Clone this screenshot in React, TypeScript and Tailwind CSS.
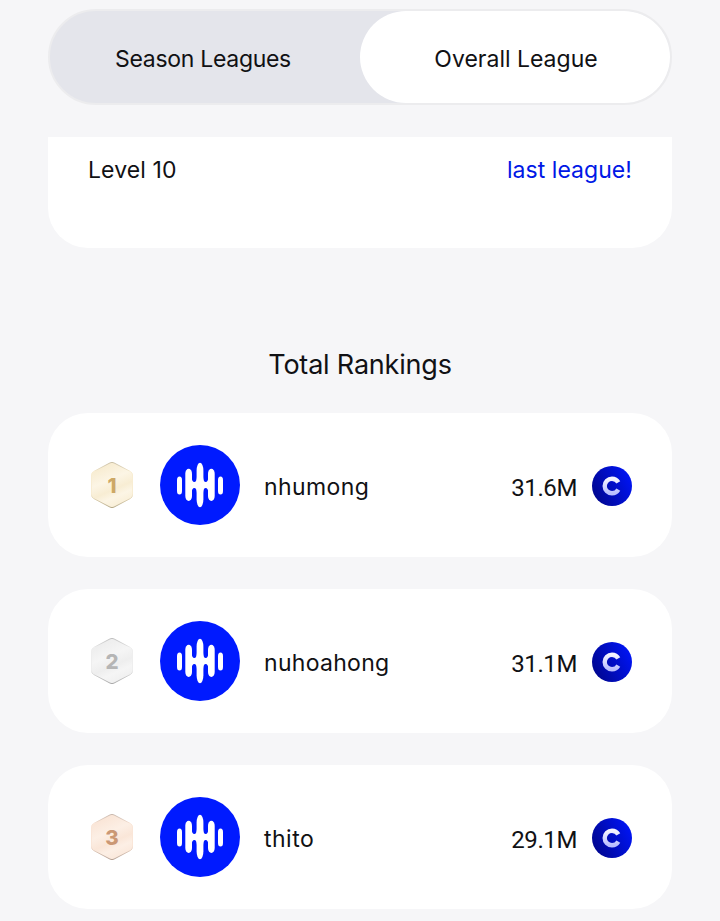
import React from "react";
import clsx from "clsx";

type Tier = "gold" | "silver" | "bronze";

interface Player {
  rank: number;
  name: string;
  score: string;
  tier: Tier;
  nameClass: string;
}

const players: Player[] = [
  {
    rank: 1,
    name: "nhumong",
    score: "31.6M",
    tier: "gold",
    nameClass: "tracking-[0.4px]",
  },
  {
    rank: 2,
    name: "nuhoahong",
    score: "31.1M",
    tier: "silver",
    nameClass: "tracking-[0.3px]",
  },
  {
    rank: 3,
    name: "thito",
    score: "29.1M",
    tier: "bronze",
    nameClass: "tracking-[0.5px]",
  },
];

const tierColors = {
  gold: { light: "#fcf5e5", dark: "#f8edd3", edge: "#b5a887", text: "#cda866" },
  silver: {
    light: "#f5f5f5",
    dark: "#eeeeee",
    edge: "#a8a8a8",
    text: "#b5b5b5",
  },
  bronze: {
    light: "#fcefe5",
    dark: "#fae6d8",
    edge: "#b49f92",
    text: "#cb9874",
  },
};

const RankBadge = ({ rank, tier }: { rank: number; tier: Tier }) => {
  const colors = tierColors[tier];

  return (
    <svg viewBox="0 0 48 48" className="size-12 shrink-0">
      <defs>
        <linearGradient id={`face-${tier}`} x1="0.3" y1="0" x2="0.7" y2="1">
          <stop offset="0.1" stopColor={colors.dark} />
          <stop offset="0.38" stopColor={colors.light} />
          <stop offset="0.6" stopColor={colors.dark} />
          <stop offset="0.75" stopColor={colors.light} />
          <stop offset="1" stopColor={colors.dark} />
        </linearGradient>
        <linearGradient id={`edge-${tier}`} x1="0" y1="0" x2="0" y2="1">
          <stop offset="0" stopColor={colors.edge} stopOpacity="0.7" />
          <stop offset="0.2" stopColor={colors.dark} />
          <stop offset="0.7" stopColor={colors.dark} />
          <stop offset="1" stopColor={colors.edge} />
        </linearGradient>
      </defs>
      <path
        d="M22 1.9Q24 .9 26 1.9L42.5 10.6Q44.5 11.7 44.5 14V34Q44.5 36.3 42.5 37.4L26 46.1Q24 47.1 22 46.1L5.5 37.4Q3.5 36.3 3.5 34V14Q3.5 11.7 5.5 10.6Z"
        fill={`url(#face-${tier})`}
        stroke={`url(#edge-${tier})`}
      />
      <text
        x="24"
        y="31.7"
        textAnchor="middle"
        fontSize="20.5"
        fill={colors.text}
        className="font-['Inter',sans-serif] font-extrabold"
      >
        {rank}
      </text>
    </svg>
  );
};

const Avatar = () => (
  <svg viewBox="0 0 80 80" className="ml-6 size-20 shrink-0">
    <circle cx="40" cy="40" r="40" fill="#001aff" />
    <g fill="#fff">
      <rect x="17" y="31.5" width="5" height="18" rx="2.5" ry="3.5" />
      <rect x="25.3" y="23.7" width="6.7" height="32.3" rx="3.35" ry="5" />
      <rect x="36.6" y="17.7" width="6.8" height="44.6" rx="3.4" ry="8" />
      <rect x="48" y="23.7" width="6.7" height="32.3" rx="3.35" ry="5" />
      <rect x="58" y="31.5" width="5" height="18" rx="2.5" ry="3.5" />
      <path d="M31.5 32Q32 37 34.3 37Q36.6 37 37 32H43Q43.4 37 45.7 37Q48 37 48.5 32V48Q48 43 45.7 43Q43.4 43 43 48H37Q36.6 43 34.3 43Q32 43 31.5 48Z" />
    </g>
  </svg>
);

const CoinIcon = () => (
  <svg viewBox="0 0 40 40" className="mt-0.5 ml-[15px] size-10 shrink-0">
    <defs>
      <linearGradient id="coin" x1="0" y1="0.7" x2="1" y2="0.2">
        <stop offset="0" stopColor="#00068f" />
        <stop offset="1" stopColor="#0015fa" />
      </linearGradient>
      <linearGradient id="coin-mark" x1="0" y1="0" x2="0" y2="1">
        <stop offset="0" stopColor="#f4f4ff" />
        <stop offset="1" stopColor="#b9beff" />
      </linearGradient>
    </defs>
    <circle cx="20" cy="20" r="20" fill="url(#coin)" />
    <circle
      cx="20"
      cy="20"
      r="7.3"
      fill="none"
      stroke="url(#coin-mark)"
      strokeWidth="4.4"
      pathLength="360"
      strokeDasharray="300 60"
      strokeDashoffset="-30"
    />
  </svg>
);

const RankingRow = ({ player }: { player: Player }) => (
  <li className="flex h-36 items-center rounded-[40px] bg-white px-10">
    <RankBadge rank={player.rank} tier={player.tier} />
    <Avatar />
    <span className={clsx("ml-6 flex-1 pt-1", player.nameClass)}>
      {player.name}
    </span>
    <span className="pt-1.5 font-['Roboto',sans-serif] text-2xl tracking-[-0.4px]">
      {player.score}
    </span>
    <CoinIcon />
  </li>
);

const LeagueTabs = () => (
  <div className="flex h-24 rounded-full border-2 border-[#ececee] bg-[#e4e5eb]">
    <button className="w-1/2 pt-1 pr-1 tracking-[-0.3px]">
      Season Leagues
    </button>
    <button className="w-1/2 rounded-full bg-white pt-1 pl-0.5">
      Overall League
    </button>
  </div>
);

export default function App() {
  return (
    <main className="h-[921px] w-[720px] overflow-hidden bg-[#f6f6f8] px-12 pt-[9px] font-['Inter',sans-serif] text-[23px] text-[#111114]">
      <LeagueTabs />
      <section className="mt-8 flex h-[111px] justify-between rounded-b-[40px] bg-white px-10 pt-4">
        <span className="tracking-[0.1px]">Level 10</span>
        <span className="tracking-[0.05px] text-[#0018e6]">last league!</span>
      </section>
      <h1 className="mt-[99px] text-center text-[27px] leading-9 tracking-[-0.2px]">
        Total Rankings
      </h1>
      <ul className="mt-[30px] flex flex-col gap-8">
        {players.map((player) => (
          <RankingRow key={player.name} player={player} />
        ))}
      </ul>
    </main>
  );
}
